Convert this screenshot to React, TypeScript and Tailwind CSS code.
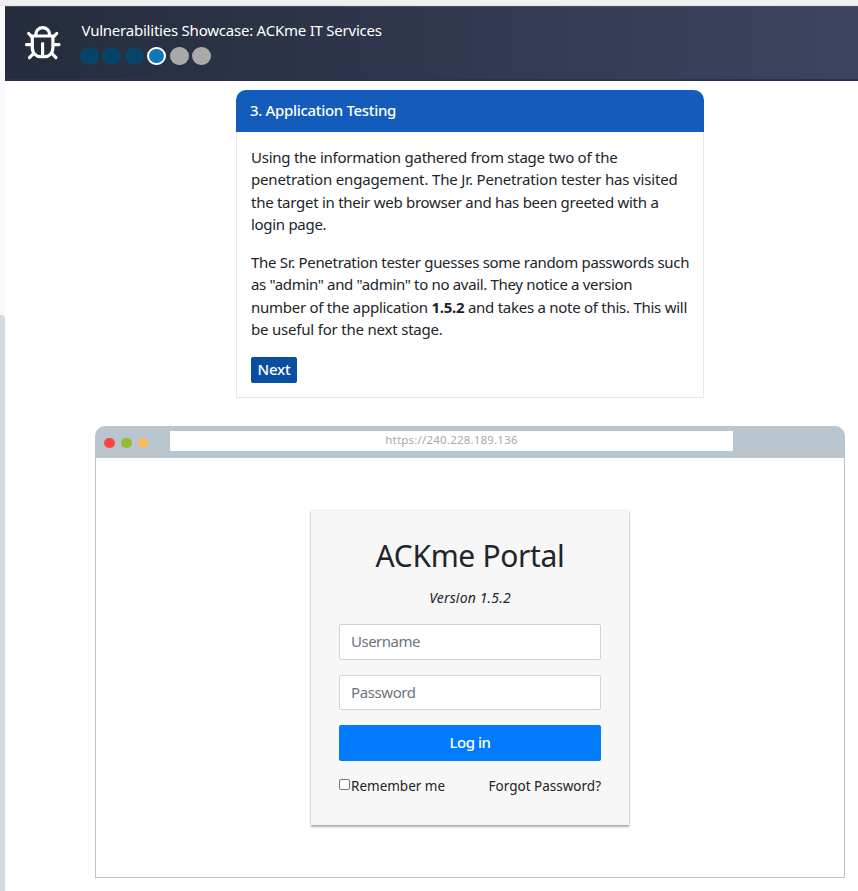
import React from 'react';

function BugIcon() {
  return (
    <svg width="38" height="37" viewBox="24 25 38 37" fill="none" stroke="#fff" strokeWidth="3.2" strokeLinecap="round" className="block shrink-0">
      <path d="M35.800 35.500v-1a6.900 6.900 0 0 1 13.800 0v1" />
      <path d="M32.300 36h20.600v11.500c0 6-4 9.200-8.300 9.200h-4c-4.300 0-8.300-3.200-8.300-9.200z" />
      <path d="M42.600 43.500v12" />
      <path d="M26.500 44.600h5.500M53.500 44.600h5.500" />
      <path d="M28.700 33.500l3.300 3.500M56.700 33.500l-3.300 3.500M33.500 53.500l-4 4.200M52 53.500l4 4.200" />
    </svg>
  );
}

const stages = ['bg-[#064468]', 'bg-[#064468]', 'bg-[#064468]', 'bg-[#1079bb] border-2 border-white', 'bg-[#a9a9a9]', 'bg-[#a9a9a9]'];

function Line({ children, className = '' }: { children: React.ReactNode; className?: string }) {
  return <span className={`block whitespace-nowrap ${className}`}>{children}</span>;
}

export default function App() {
  return (
    <div className="flex h-[891px] w-[858px] flex-col overflow-hidden bg-white font-['Noto_Sans',sans-serif] text-[15px] leading-[22.5px] text-[#212529]">
      <div className="h-[6px] shrink-0 border-b border-[#e4e4e4] bg-[#f0f0f0]" />
      <div className="flex min-h-0 flex-1">
        <div className="flex w-[5px] shrink-0 flex-col bg-[#f9f9fb] pt-[309px]">
          <div className="flex-1 rounded-tr-[4px] bg-[#d4d8e0]" />
        </div>
        <main className="flex min-w-0 flex-1 flex-col">
          <header className="flex h-[75px] shrink-0 border-t border-b-2 border-t-[#4a5060] border-b-[#2b3350] bg-linear-to-r from-[#242c3d] to-[#3e445f] pt-[18px] pl-[19px]">
            <BugIcon />
            <div className="-mt-[6px] ml-[19.500px] text-white">
              <Line className="tracking-[-0.225px]">Vulnerabilities Showcase: ACKme IT Services</Line>
              <div className="-ml-[2px] mt-[5px] flex gap-[3.600px]">
                {stages.map((color, i) => (
                  <span key={i} className={`h-[18px] w-[19px] rounded-full ${color}`} />
                ))}
              </div>
            </div>
          </header>

          <section className="mt-[9px] ml-[231px] h-[308px] w-[468px] shrink-0">
            <h2 className="h-[42px] rounded-t-[10px] bg-[#145cbb] pt-[9px] pl-[14px] font-medium text-white">
              <Line className="tracking-[-0.32px]">3. Application Testing</Line>
            </h2>
            <div className="h-[266px] border border-t-0 border-[#e7e7e9] px-[14px] pt-[13.600px]">
              <p>
                <Line className="tracking-[-0.25px]">Using the information gathered from stage two of the</Line>
                <Line className="tracking-[-0.16px]">penetration engagement. The Jr. Penetration tester has visited</Line>
                <Line className="tracking-[-0.27px]">the target in their web browser and has been greeted with a</Line>
                <Line className="tracking-[-0.3px]">login page.</Line>
              </p>
              <p className="mt-[15px]">
                <Line className="tracking-[-0.305px]">The Sr. Penetration tester guesses some random passwords such</Line>
                <Line className="tracking-[-0.33px]">as "admin" and "admin" to no avail. They notice a version</Line>
                <Line className="tracking-[-0.265px]">number of the application <b>1.5.2</b> and takes a note of this. This will</Line>
                <Line className="tracking-[-0.2px]">be useful for the next stage.</Line>
              </p>
              <button className="mt-[16.400px] flex h-[26px] w-[46px] items-center justify-center rounded-[2px] bg-[#094ea1] pb-[2px] font-medium tracking-[-0.2px] text-white">Next</button>
            </div>
          </section>

          <section className="mt-[28px] ml-[90px] flex h-[452px] w-[750px] shrink-0 flex-col">
            <div className="flex h-[32px] shrink-0 rounded-t-[10px] bg-[#bac6cf] pl-[9px]">
              <div className="mt-[12px] flex gap-[6px]">
                <span className="h-[10px] w-[11px] rounded-full bg-[#ff4543]" />
                <span className="h-[10px] w-[11px] rounded-full bg-[#98bb2f]" />
                <span className="size-[10px] rounded-full bg-[#ffbc56]" />
              </div>
              <div className="mt-[5px] ml-[22px] h-[20px] w-[563px] bg-white text-center text-[11.500px] leading-[18px] tracking-[0.2px] text-[#a9a9a9]">https://240.228.189.136</div>
            </div>
            <div className="flex flex-1 justify-center border border-t-0 border-[#bac6cf] pt-[53px]">
              <form className="flex h-[314px] w-[318px] flex-col bg-[#f7f7f7] px-[28px] pt-[27px] shadow-[0_2px_2px_rgba(0,0,0,0.3),0_0_2px_rgba(0,0,0,0.2)]">
                <h1 className="text-center text-[30px] leading-[36px] tracking-[-0.35px]">ACKme Portal</h1>
                <p className="mt-[13px] text-center text-[14px] leading-[22px] tracking-[0.15px] italic">Version 1.5.2</p>
                <input placeholder="Username" className="mt-[15px] h-[36px] w-full shrink-0 rounded-[2px] border border-[#ced4da] bg-white px-[11px] pb-[2px] tracking-[-0.5px] placeholder:text-[#6c757d]" />
                <input placeholder="Password" className="mt-[15px] h-[35px] w-full shrink-0 rounded-[2px] border border-[#ced4da] bg-white px-[11px] pb-[2px] tracking-[-0.4px] placeholder:text-[#6c757d]" />
                <button type="button" className="mt-[15px] h-[36px] shrink-0 rounded-[2px] bg-[#007bff] pb-[2px] font-medium tracking-[-0.5px] text-white">Log in</button>
                <div className="mt-[15px] flex justify-between text-[13.500px] leading-[20px]">
                  <label className="flex">
                    <span className="mt-[3px] mr-[1px] size-[11px] rounded-[2px] border border-[#767676] bg-white" />
                    Remember me
                  </label>
                  <span>Forgot Password?</span>
                </div>
              </form>
            </div>
          </section>
        </main>
      </div>
    </div>
  );
}
